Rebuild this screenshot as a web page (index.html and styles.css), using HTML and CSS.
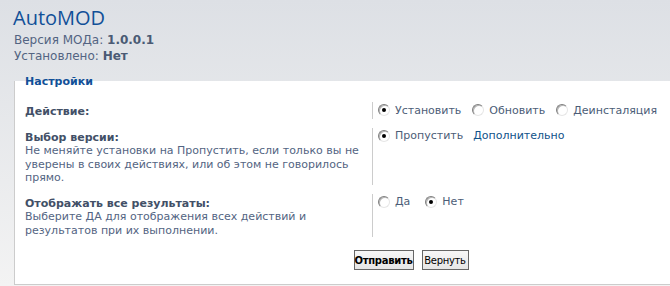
FILE: index.html
```html
<!DOCTYPE html>
<html lang="ru">
<head>
<meta charset="utf-8">
<title>AutoMOD</title>
<link rel="stylesheet" href="styles.css">
</head>
<body>
<div class="page">
  <h1 class="title">AutoMOD</h1>
  <p class="meta">Версия МОДа: <strong>1.0.0.1</strong></p>
  <p class="meta">Установлено: <strong>Нет</strong></p>

  <form class="panel">
    <div class="legend">Настройки</div>

    <dl class="row">
      <dt><span class="label">Действие:</span></dt>
      <dd>
        <span class="opt"><span class="radio checked"></span>Установить</span>
        <span class="opt"><span class="radio"></span>Обновить</span>
        <span class="opt"><span class="radio"></span>Деинсталяция</span>
      </dd>
    </dl>

    <dl class="row">
      <dt>
        <span class="label">Выбор версии:</span>
        <span class="explain">Не меняйте установки на Пропустить, если только вы не уверены в своих действиях, или об этом не говорилось прямо.</span>
      </dt>
      <dd>
        <span class="opt"><span class="radio checked"></span>Пропустить</span>
        <a class="more" href="#">Дополнительно</a>
      </dd>
    </dl>

    <dl class="row">
      <dt>
        <span class="label">Отображать все результаты:</span>
        <span class="explain">Выберите ДА для отображения всех действий и результатов при их выполнении.</span>
      </dt>
      <dd>
        <span class="opt wide"><span class="radio"></span>Да</span>
        <span class="opt"><span class="radio checked"></span>Нет</span>
      </dd>
    </dl>

    <div class="submit">
      <button type="button" class="btn primary">Отправить</button>
      <button type="button" class="btn secondary">Вернуть</button>
    </div>
  </form>
</div>
</body>
</html>
```

FILE: styles.css
```css
html, body {
  margin: 0;
  padding: 0;
  overflow: hidden;
}
body {
  width: 670px;
  height: 286px;
  background: linear-gradient(#dde0e5, #f3f3f3);
  font-family: "DejaVu Sans", Verdana, sans-serif;
  font-size: 11px;
  color: #536482;
}
.page {
  padding: 6px 0 0 14px;
}
.title {
  margin: 0 0 2px -1px;
  font-family: "Open Sans", "Liberation Sans", sans-serif;
  font-weight: normal;
  font-size: 20px;
  line-height: 24px;
  color: #115098;
}
.meta {
  margin: 0;
  font-size: 12px;
  line-height: 16px;
  color: #536482;
}
.meta strong {
  color: #4a5a74;
}
.panel {
  display: flow-root;
  margin-top: 17px;
  width: 772px;
  padding: 0 10px 14px 10px;
  background: #fff;
  border-left: 1px solid #cccccc;
  border-bottom: 1px solid #cccccc;
}
.legend {
  margin: -6px 0 13px 0;
  font-weight: bold;
  font-size: 11px;
  line-height: 14px;
  color: #115098;
}
.row {
  display: flex;
  margin: 0 0 9px 0;
}
.row dt {
  width: 347px;
  flex: none;
  line-height: 13.5px;
  padding-top: 3px;
}
.label {
  display: block;
  font-weight: bold;
  color: #425067;
}
.explain {
  display: block;
  color: #536482;
}
.row dd {
  margin: 0;
  padding-left: 5px;
  border-left: 1px solid #cccccc;
  display: flex;
  align-items: flex-start;
  flex-wrap: wrap;
  color: #4c5d77;
}
.opt {
  display: inline-flex;
  align-items: center;
  height: 16px;
  margin-right: 11px;
}
.opt.wide {
  margin-right: 15px;
}
.radio {
  box-sizing: border-box;
  width: 12px;
  height: 12px;
  margin-right: 5px;
  border-radius: 50%;
  border: 1px solid;
  border-color: #7f7f7f #e6e6e6 #e6e6e6 #7f7f7f;
  box-shadow: inset 1px 1px 0 #b5b5b5;
  background: #fff;
  display: inline-flex;
  align-items: center;
  justify-content: center;
}
.radio.checked::after {
  content: "";
  width: 4px;
  height: 4px;
  border-radius: 50%;
  background: #000;
}
.more {
  display: inline-block;
  height: 16px;
  line-height: 16px;
  margin-left: -1px;
  color: #105289;
  text-decoration: none;
}
.submit {
  display: flex;
  justify-content: center;
  gap: 8px;
  padding-top: 4px;
}
.btn {
  box-sizing: border-box;
  height: 20px;
  padding: 0;
  font-family: "DejaVu Sans", Verdana, sans-serif;
  font-size: 10px;
  letter-spacing: -0.3px;
  color: #000;
  background: linear-gradient(#f7f7f7, #e6e6e6);
  border: 1px solid #666;
  border-radius: 0;
}
.btn.primary {
  width: 60px;
  font-weight: bold;
}
.btn.secondary {
  width: 47px;
}
```
